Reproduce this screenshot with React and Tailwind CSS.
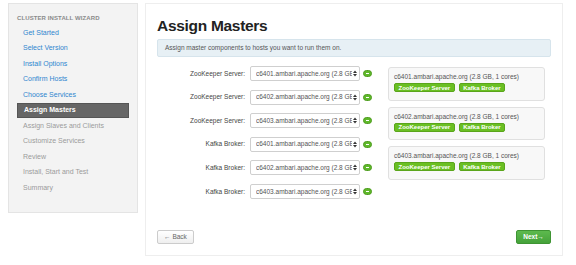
import React from "react";

const steps = [
  { t: "Get Started", s: "done" },
  { t: "Select Version", s: "done" },
  { t: "Install Options", s: "done" },
  { t: "Confirm Hosts", s: "done" },
  { t: "Choose Services", s: "done" },
  { t: "Assign Masters", s: "active" },
  { t: "Assign Slaves and Clients", s: "todo" },
  { t: "Customize Services", s: "todo" },
  { t: "Review", s: "todo" },
  { t: "Install, Start and Test", s: "todo" },
  { t: "Summary", s: "todo" },
];

const rows = [
  ["ZooKeeper Server:", "c6401"],
  ["ZooKeeper Server:", "c6402"],
  ["ZooKeeper Server:", "c6403"],
  ["Kafka Broker:", "c6401"],
  ["Kafka Broker:", "c6402"],
  ["Kafka Broker:", "c6403"],
];

const hosts = ["c6401", "c6402", "c6403"];

function Plus() {
  return (
    <div className="w-[9px] h-[7px] rounded-full bg-[#5fb82a] border border-[#4e9c1f] flex items-center justify-center">
      <div className="w-[3px] h-[1px] bg-white" />
    </div>
  );
}

function Select({ host }) {
  return (
    <div className="w-[110px] h-[15px] bg-white border border-[#cfcfcf] rounded-[2px] flex items-center pl-[5px] pr-[2px] overflow-hidden">
      <span className="flex-1 min-w-0 whitespace-nowrap overflow-hidden text-[6.5px] text-[#555]">
        {host}.ambari.apache.org (2.8 GE
      </span>
      <svg width="4" height="7" viewBox="0 0 4 7" className="ml-[1px] shrink-0">
        <path d="M0 3 L2 0.5 L4 3 Z" fill="#333" />
        <path d="M0 4 L2 6.5 L4 4 Z" fill="#333" />
      </svg>
    </div>
  );
}

function Badge({ children }) {
  return (
    <span className="inline-flex items-center h-[9px] px-[3.5px] rounded-[2px] bg-[#6abf23] border border-[#5aa51b] text-white text-[6px] font-bold leading-none">
      {children}
    </span>
  );
}

export default function App() {
  return (
    <div
      className="w-[576px] h-[265px] bg-white flex items-start pl-[8px] pt-[3px] gap-[7px]"
      style={{ fontFamily: '"Liberation Sans", Arial, sans-serif' }}
    >
      <aside className="w-[130px] h-[210px] bg-[#f3f3f3] border border-[#e4e4e4] pt-[10px] px-[8px]">
        <div className="h-[9px] flex items-center text-[6px] font-bold text-[#8a8a8a] tracking-[0.1px] mb-[2px]">
          CLUSTER INSTALL WIZARD
        </div>
        {steps.map((s) => (
          <div
            key={s.t}
            className={
              "h-[15.5px] flex items-center px-[6px] text-[7px] " +
              (s.s === "done"
                ? "text-[#2f86cf]"
                : s.s === "active"
                ? "bg-[#666666] text-white font-bold border border-[#555]"
                : "text-[#9b9b9b]")
            }
          >
            {s.t}
          </div>
        ))}
      </aside>

      <main className="w-[418px] h-[253px] bg-white border border-[#eeeeee] pt-[12px] px-[11px] pb-[11px] flex flex-col">
        <h1 className="text-[15.5px] leading-[19px] font-bold text-[#222] tracking-[-0.3px]">Assign Masters</h1>
        <div className="mt-[4px] h-[18px] bg-[#e7f0f5] border border-[#d6e4ec] rounded-[2px] flex items-center px-[7px] text-[6.5px] text-[#555]">
          Assign master components to hosts you want to run them on.
        </div>

        <div className="mt-[9px] flex items-start">
          <div className="flex flex-col gap-[8.6px]">
            {rows.map(([label, host], i) => (
              <div key={i} className="h-[15px] flex items-center">
                <div className="w-[88px] text-right text-[6.5px] text-[#444]">{label}</div>
                <div className="ml-[5px]">
                  <Select host={host} />
                </div>
                <div className="ml-[3px]">
                  <Plus />
                </div>
              </div>
            ))}
          </div>

          <div className="ml-[16px] mt-[1px] flex flex-col gap-[6px]">
            {hosts.map((h) => (
              <div
                key={h}
                className="w-[157px] h-[33.5px] bg-[#f8f8f8] border border-[#e0e0e0] rounded-[3px] px-[5px] pt-[4px]"
              >
                <div className="text-[6.5px] text-[#555] leading-[9px]">
                  {h}.ambari.apache.org (2.8 GB, 1 cores)
                </div>
                <div className="mt-[2px] flex gap-[4px]">
                  <Badge>ZooKeeper Server</Badge>
                  <Badge>Kafka Broker</Badge>
                </div>
              </div>
            ))}
          </div>
        </div>

        <div className="mt-auto flex justify-between items-center">
          <button className="w-[37px] h-[14px] bg-gradient-to-b from-white to-[#efefef] border border-[#ccc] rounded-[2px] text-[6.5px] text-[#666] flex items-center justify-center">
            ← Back
          </button>
          <button className="w-[35px] h-[14px] bg-gradient-to-b from-[#5dba4e] to-[#45a23a] border border-[#3e9433] rounded-[2px] text-[6.5px] text-white font-bold flex items-center justify-center">
            Next→
          </button>
        </div>
      </main>
    </div>
  );
}
